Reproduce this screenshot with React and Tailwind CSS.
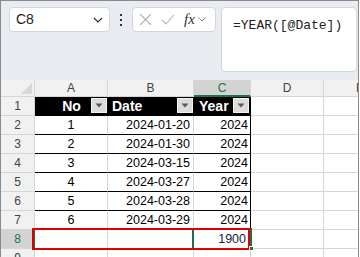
const rows = [
  { no: '1', date: '2024-01-20', year: '2024' },
  { no: '2', date: '2024-01-30', year: '2024' },
  { no: '3', date: '2024-03-15', year: '2024' },
  { no: '4', date: '2024-03-27', year: '2024' },
  { no: '5', date: '2024-03-28', year: '2024' },
  { no: '6', date: '2024-03-29', year: '2024' },
];

const FilterButton = () => (
  <div className="absolute right-[1px] top-[1px] w-[16px] h-[15px] bg-[#dcdcdc] border border-[#f4f4f4] flex items-center justify-center">
    <svg width="8" height="5" viewBox="0 0 8 5">
      <path d="M0.5 0.5 L7.5 0.5 L4 4.5 Z" fill="#5a5a5a" />
    </svg>
  </div>
);

const ColHead = ({ w, label, active }) => (
  <div
    className={`${w} h-full shrink-0 flex items-center justify-center border-r border-[#d6d6d6] text-[12px] ${
      active ? 'bg-[#d3d3d3] text-[#1e7145] border-b-2 border-b-[#1e7145]' : 'bg-[#f1f1f1] text-[#444] border-b border-b-[#d6d6d6]'
    }`}
  >
    {label}
  </div>
);

const RowHead = ({ n, active }) => (
  <div
    className={`w-[34px] h-full shrink-0 flex items-center justify-center border-r border-b border-[#d6d6d6] text-[12px] ${
      active ? 'bg-[#d3d3d3] text-[#1e7145]' : 'bg-[#f1f1f1] text-[#444]'
    }`}
  >
    {n}
  </div>
);

const Blank = ({ w }) => <div className={`${w} h-full shrink-0 border-r border-b border-[#d6d6d6]`} />;

export default function App() {
  return (
    <div className="w-[360px] h-[257px] overflow-hidden bg-white" style={{ fontFamily: '"Liberation Sans", Arial, sans-serif' }}>
      <div className="relative w-[359px] h-[257px] overflow-hidden border-l border-t border-r border-[#8a8a8a] flex flex-col">
        {/* formula bar area */}
        <div className="h-[79px] shrink-0 bg-[#e9edf1] flex items-start pt-[6px] pl-[8px]">
          <div className="w-[101px] h-[25px] shrink-0 bg-white border border-[#d4d6d9] rounded-[4px] flex items-center justify-between pl-[6px] pr-[6px]">
            <span className="text-[14px] text-[#222]">C8</span>
            <svg width="10" height="6" viewBox="0 0 10 6">
              <path d="M1 1 L5 5 L9 1" fill="none" stroke="#333" strokeWidth="1.2" />
            </svg>
          </div>
          <div className="w-[22px] h-[25px] shrink-0 flex flex-col items-center justify-center gap-[3px]">
            <div className="w-[2px] h-[2px] bg-[#333]" />
            <div className="w-[2px] h-[2px] bg-[#333]" />
            <div className="w-[2px] h-[2px] bg-[#333]" />
          </div>
          <div className="w-[84px] h-[25px] shrink-0 bg-white border border-[#d4d6d9] rounded-[4px] flex items-center pl-[6px] gap-[9px]">
            <svg width="13" height="13" viewBox="0 0 13 13">
              <path d="M1 1 L12 12 M12 1 L1 12" stroke="#b4b4b4" strokeWidth="1.1" />
            </svg>
            <svg width="14" height="11" viewBox="0 0 14 11">
              <path d="M1 6 L5 10 L13 1" fill="none" stroke="#b4b4b4" strokeWidth="1.1" />
            </svg>
            <div className="flex items-center gap-[3px]">
              <span className="text-[15px] italic text-[#333] leading-none" style={{ fontFamily: '"Liberation Serif", "Times New Roman", serif' }}>
                fx
              </span>
              <svg width="8" height="5" viewBox="0 0 8 5">
                <path d="M0.5 0.5 L4 4 L7.5 0.5" fill="none" stroke="#888" strokeWidth="1" />
              </svg>
            </div>
          </div>
          <div className="flex-1 h-[65px] ml-[5px] mr-[1px] bg-white border border-[#d4d6d9] rounded-[4px] pl-[11px] pt-[4px]">
            <span className="text-[13px] text-[#222] whitespace-nowrap" style={{ fontFamily: '"Liberation Mono", "Courier New", monospace' }}>
              =YEAR([@Date])
            </span>
          </div>
        </div>

        {/* column headers */}
        <div className="h-[17px] shrink-0 flex">
          <div className="w-[34px] h-full shrink-0 bg-[#f1f1f1] border-r border-b border-[#d6d6d6] flex items-end justify-end p-[2px]">
            <svg width="11" height="11" viewBox="0 0 11 11">
              <path d="M11 0 L11 11 L0 11 Z" fill="#d7d7d7" />
            </svg>
          </div>
          <ColHead w="w-[73px]" label="A" />
          <ColHead w="w-[86px]" label="B" />
          <ColHead w="w-[57px]" label="C" active />
          <ColHead w="w-[73px]" label="D" />
          <ColHead w="w-[73px]" label="E" />
        </div>

        {/* row 1: table header */}
        <div className="h-[19px] shrink-0 flex">
          <RowHead n="1" />
          <div className="relative w-[73px] h-full shrink-0 bg-black text-white font-bold text-[14px] flex items-center justify-center">
            No
            <FilterButton />
          </div>
          <div className="relative w-[86px] h-full shrink-0 bg-black text-white font-bold text-[14px] flex items-center pl-[4px]">
            Date
            <FilterButton />
          </div>
          <div className="relative w-[57px] h-full shrink-0 bg-black text-white font-bold text-[14px] flex items-center pl-[5px] border-r border-black">
            Year
            <FilterButton />
          </div>
          <Blank w="w-[73px]" />
          <Blank w="w-[73px]" />
        </div>

        {rows.map((r, i) => (
          <div key={i} className="h-[19px] shrink-0 flex">
            <RowHead n={String(i + 2)} />
            <div className="w-[73px] h-full shrink-0 border-r border-r-[#d6d6d6] border-b border-b-black flex items-center justify-center text-[12.5px] text-black">
              {r.no}
            </div>
            <div className="w-[86px] h-full shrink-0 border-r border-r-[#d6d6d6] border-b border-b-black flex items-center justify-end pr-[3px] text-[12.5px] text-black">
              {r.date}
            </div>
            <div className="w-[57px] h-full shrink-0 border-r border-r-black border-b border-b-black flex items-center justify-end pr-[2px] text-[12.5px] text-black">
              {r.year}
            </div>
            <Blank w="w-[73px]" />
            <Blank w="w-[73px]" />
          </div>
        ))}

        {/* row 8 */}
        <div className="h-[19px] shrink-0 flex">
          <RowHead n="8" active />
          <Blank w="w-[73px]" />
          <Blank w="w-[86px]" />
          <div className="w-[57px] h-full shrink-0 border-r border-b border-[#d6d6d6] flex items-center justify-end pr-[4px] text-[12.5px] text-[#1a1a40]">
            1900
          </div>
          <Blank w="w-[73px]" />
          <Blank w="w-[73px]" />
        </div>

        {/* row 9 */}
        <div className="h-[19px] shrink-0 flex">
          <RowHead n="9" />
          <Blank w="w-[73px]" />
          <Blank w="w-[86px]" />
          <Blank w="w-[57px]" />
          <Blank w="w-[73px]" />
          <Blank w="w-[73px]" />
        </div>

        {/* selection overlays */}
        <div className="absolute left-[191px] top-[227px] w-[60px] h-[22px] border-2 border-[#1e7145]" />
        <div className="absolute left-[33px] top-[227px] w-[1px] h-[22px] bg-[#1e7145]" />
        <div className="absolute left-[31px] top-[227px] w-[218px] h-[22px] border-2 border-[#e00000]" />
        <div className="absolute left-[248px] top-[245px] w-[5px] h-[5px] bg-[#1e7145] border border-white" />
      </div>
    </div>
  );
}
